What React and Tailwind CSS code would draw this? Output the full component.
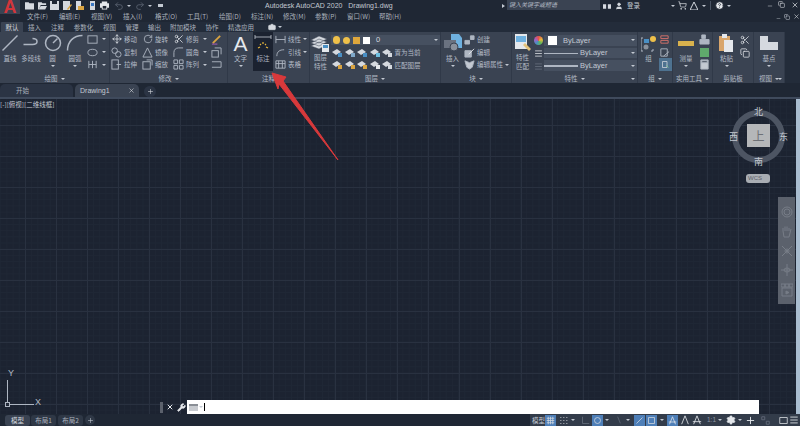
import { Minus, Plus, X, ShoppingCart, User, HelpCircle, Camera, Wrench, Copy, Move, RotateCw, Scissors, Settings, Menu, Undo2, Redo2 } from 'lucide-react';

const menus = ['文件(F)', '编辑(E)', '视图(V)', '插入(I)', '格式(O)', '工具(T)', '绘图(D)', '标注(N)', '修改(M)', '参数(P)', '窗口(W)', '帮助(H)'];
const tabs = [
  ['默认', 'w-[22px]'], ['插入', 'w-[23px]'], ['注释', 'w-[23px]'], ['参数化', 'w-[29px]'], ['视图', 'w-[23px]'],
  ['管理', 'w-[22px]'], ['输出', 'w-[23px]'], ['附加模块', 'w-[34px]'], ['协作', 'w-[24px]'], ['精选应用', 'w-[34px]'],
];

function Caret({ className = '' }) {
  return <span className={`inline-block w-0 h-0 border-x-[2px] border-x-transparent border-t-[2px] border-t-[#c3c9d2] ${className}`} />;
}

// 리본 패널: 본문 + 하단 제목
function Panel({ title, width, children, caret = true, corner = false }) {
  return (
    <div className={`${width} h-full flex flex-col border-r border-[#303948] shrink-0`}>
      <div className="h-[39px] flex">{children}</div>
      <div className="h-[12px] pt-[3px] relative flex items-center justify-center gap-[3px] text-[6.5px] text-[#b4bbc6] leading-none">
        {title}
        {caret && <Caret />}
        {corner && <Caret className="absolute right-[2px]" />}
      </div>
    </div>
  );
}

function Big({ label, label2, icon, width = 'w-[21px]', dark = false, caret = false }) {
  return (
    <div className={`${width} h-full flex flex-col items-center pt-[1px] text-[6.5px] leading-[9px] text-[#b4bbc6] whitespace-nowrap ${dark ? 'bg-[#1b2230]' : ''}`}>
      <div className="h-[20px] flex items-center justify-center">{icon}</div>
      <span className="mt-[1px]">{label}</span>
      {label2 && <span>{label2}</span>}
      {caret && <Caret className="mt-[2px]" />}
    </div>
  );
}

function Row({ icon, label, caret = false, width = 'w-[31px]' }) {
  return (
    <div className={`${width} h-[13px] flex items-center gap-[2px] text-[6.5px] leading-none text-[#b4bbc6] whitespace-nowrap`}>
      <span className="w-[11px] h-[11px] flex items-center justify-center shrink-0">{icon}</span>
      <span>{label}</span>
      {caret && <Caret className="ml-auto mr-[4px]" />}
    </div>
  );
}

function G({ children, size = 11, className = '' }) {
  return (
    <svg width={size} height={size} viewBox="0 0 12 12" fill="none" stroke="#aeb6c2" strokeWidth="1" className={className}>
      {children}
    </svg>
  );
}

function Dropdown({ children }) {
  return (
    <div className="w-[93px] h-[11px] bg-[#465060] flex items-center text-[7.5px] leading-none text-[#c3c9d2] relative font-['Liberation_Sans',sans-serif]">
      {children}
      <Caret className="absolute right-[2px]" />
    </div>
  );
}

function LayerIcon({ c = '#7fa8c9', k = '#d5d9df' }) {
  return (
    <svg width="12" height="11" viewBox="0 0 12 11" className="shrink-0">
      <path d="M1 5l5-3 4 3-5 3z" fill={k} />
      <rect x="7" y="6" width="4" height="4" fill={c} />
    </svg>
  );
}

function TitleBar() {
  return (
    <div className="h-[11px] bg-[#1f2734] flex items-center relative text-[#c3c9d2]">
      <div className="w-[20px] h-[14px] bg-[#3a4352] absolute left-0 top-0 flex items-center justify-center z-10">
        <span className="text-[18px] font-bold text-[#d3363b] leading-[14px] font-['Liberation_Sans',sans-serif]">A</span>
      </div>
      <div className="ml-[25px] flex items-center gap-[3.500px]">
        <svg width="9" height="9" viewBox="0 0 10 9"><path d="M0 1h4l1 1h5v7H0z" fill="#d5d9df" /></svg>
        <svg width="9" height="9" viewBox="0 0 10 9"><path d="M0 1h4l1 1h4v2H3L1 9H0zM3 5h7L8 9H1z" fill="#d5d9df" /></svg>
        <svg width="9" height="9" viewBox="0 0 9 9"><path d="M0 0h9v9H0z" fill="#d5d9df" /><path d="M2 0h5v3H2z" fill="#1f2734" /></svg>
        <svg width="9" height="9" viewBox="0 0 9 9"><path d="M0 0h7v9H0z" fill="#d5d9df" /><path d="M5 9l4-5-1-1-4 5z" fill="#d9a441" /></svg>
        <svg width="9" height="9" viewBox="0 0 9 9"><path d="M1 0h5v9H1z" fill="#d5d9df" /><path d="M3 5h6v4H3z" fill="#d9a441" /></svg>
        <svg width="9" height="9" viewBox="0 0 9 9"><path d="M2 0h5v9H2z" fill="#d5d9df" /><path d="M3 2h3v3H3z" fill="#3b78c4" /></svg>
        <svg width="9" height="9" viewBox="0 0 10 9"><path d="M2 0h6v2h2v5H8v2H2V7H0V2h2z" fill="#e5e8ec" /><path d="M3 5h4v3H3z" fill="#1f2734" /></svg>
        <Undo2 size={10} color="#5c6472" className="ml-[1px]" />
        <Caret />
        <Redo2 size={10} color="#5c6472" />
        <Caret />
        <span className="w-[5px] h-[3px] bg-[#c3c9d2] ml-[2px]" />
      </div>
      <div className="absolute left-[265px] font-['Liberation_Sans',sans-serif] text-[7px] whitespace-pre leading-none">Autodesk AutoCAD 2020   Drawing1.dwg</div>
      <span className="absolute left-[502px] w-0 h-0 border-y-[2px] border-y-transparent border-l-[3px] border-l-[#c3c9d2]" />
      <div className="absolute left-[507px] top-0 w-[93px] h-[10px] bg-[#3a4352] text-[6px] italic leading-[10px] pl-[2px] text-[#b4bbc6] whitespace-nowrap">键入关键字或短语</div>
      <div className="absolute left-[603px] flex items-center gap-[4px]">
        <svg width="8" height="8" viewBox="0 0 9 8"><path d="M0 7V2h3.500v5zM5.500 7V2H9v5z" fill="#d5d9df" /></svg>
        <User size={8} color="#d5d9df" fill="#d5d9df" />
        <span className="text-[6.5px] leading-none">登录</span>
      </div>
      <Caret className="absolute left-[671px]" />
      <ShoppingCart size={9} color="#d5d9df" className="absolute left-[678px]" />
      <svg width="8" height="8" viewBox="0 0 8 8" className="absolute left-[690px]"><path d="M4 0l4 8H0z" fill="none" stroke="#d5d9df" /></svg>
      <Caret className="absolute left-[702px]" />
      <span className="absolute left-[710px] w-[1px] h-[9px] bg-[#4a5464]" />
      <HelpCircle size={9} color="#1f2734" fill="#e5e8ec" className="absolute left-[715px]" />
      <Caret className="absolute left-[727px]" />
      <Minus size={6} color="#d5d9df" className="absolute left-[767px] top-[3px]" />
      <Copy size={7} color="#d5d9df" className="absolute left-[778px] top-[1px]" />
      <X size={8} color="#e5e8ec" className="absolute left-[791px] top-[1px]" />
    </div>
  );
}

function MenuBar() {
  return (
    <div className="h-[11px] bg-[#1f2734] flex items-center pl-[27px] relative text-[6.5px] leading-none text-[#aab1bc]">
      {menus.map((m) => <span key={m} className="w-[32px] whitespace-nowrap">{m}</span>)}
      <Minus size={5} color="#c3c9d2" className="absolute left-[776px] top-[5px]" />
      <Copy size={6} color="#c3c9d2" className="absolute left-[784px] top-[3px]" />
      <X size={7} color="#d5d9df" className="absolute left-[793px] top-[2px]" />
    </div>
  );
}

function TabBar() {
  return (
    <div className="h-[10px] bg-[#232c3a] flex items-center text-[6.5px] leading-none text-[#aab1bc]">
      <div className="ml-[1px] flex h-full items-center">
        {tabs.map(([t, w], i) => (
          <span key={t} className={`${w} h-full flex items-center justify-center whitespace-nowrap ${i === 0 ? 'bg-[#3a4352] text-[#d5d9df] rounded-t-[1px]' : ''}`}>{t}</span>
        ))}
      </div>
      <Camera size={8} color="#d5d9df" fill="#d5d9df" className="ml-[10px]" />
      <Caret className="ml-[2px]" />
    </div>
  );
}

function Ribbon() {
  return (
    <div className="h-[51px] bg-[#232c3a] flex">
      <div className="w-[785px] h-full bg-[#3a4352] flex">
        <Panel title="绘图" width="w-[110px]">
          <Big label="直线" width="w-[20px]" icon={<G size={18}><path d="M1 11L11 1" /></G>} />
          <Big label="多段线" width="w-[22px]" icon={<G size={18}><path d="M1 7h6c4 0 4-4 0-4" /></G>} />
          <Big label="圆" caret icon={<G size={18}><circle cx="6" cy="6" r="5" /><path d="M6 6l3-3" /></G>} />
          <Big label="圆弧" caret width="w-[24px]" icon={<G size={18}><path d="M1 11C1 5 5 1 11 1" /></G>} />
          <div className="flex flex-col pt-[1px]">
            <Row width="w-[22px]" caret icon={<G><rect x="1" y="2" width="10" height="8" /></G>} />
            <Row width="w-[22px]" caret icon={<G><ellipse cx="6" cy="6" rx="5" ry="3.500" /></G>} />
            <Row width="w-[22px]" caret icon={<G><path d="M2 2v8M6 2v8M10 2v8M2 6h8" /></G>} />
          </div>
        </Panel>
        <Panel title="修改" width="w-[118px]">
          <div className="flex flex-col pl-[1px] pt-[1px]">
            <Row label="移动" icon={<Move size={10} color="#d5d9df" />} />
            <Row label="复制" icon={<G><circle cx="4" cy="4" r="3" /><circle cx="8" cy="8" r="3" /></G>} />
            <Row label="拉伸" icon={<G><rect x="1" y="1" width="7" height="10" /><path d="M6 6h5" /></G>} />
          </div>
          <div className="flex flex-col pt-[1px]">
            <Row label="旋转" icon={<RotateCw size={10} color="#aeb6c2" />} />
            <Row label="镜像" icon={<G><path d="M6 1L1 11h10z" /></G>} />
            <Row label="缩放" icon={<G><rect x="1" y="3" width="8" height="8" /><path d="M5 1h6v6" /></G>} />
          </div>
          <div className="flex flex-col pt-[1px]">
            <Row label="修剪" width="w-[38px]" caret icon={<Scissors size={10} color="#d5d9df" />} />
            <Row label="圆角" width="w-[38px]" caret icon={<G><path d="M1 11V6c0-3 2-5 5-5h5" /></G>} />
            <Row label="阵列" width="w-[38px]" caret icon={<G><path d="M1 1h4v4H1zM7 1h4v4H7zM1 7h4v4H1zM7 7h4v4H7z" /></G>} />
          </div>
          <div className="flex flex-col pt-[1px]">
            <Row width="w-[12px]" icon={<G><path d="M2 10L10 2" stroke="#d9a441" strokeWidth="2" /><path d="M1 11h6" stroke="#b25fc4" /></G>} />
            <Row width="w-[12px]" icon={<G><rect x="1" y="4" width="7" height="7" /><path d="M4 1h7v7" /></G>} />
            <Row width="w-[12px]" icon={<G><path d="M1 3h10M1 9h10M11 3v6" /></G>} />
          </div>
        </Panel>
        <Panel title="注释" width="w-[82px]" caret={false}>
          <Big label="文字" caret width="w-[25px]" icon={<span className="font-['Liberation_Sans',sans-serif] text-[21px] leading-none text-[#e5e8ec]">A</span>} />
          <Big label="标注" dark width="w-[20px]" icon={
            <svg width="18" height="17" viewBox="0 0 18 17" fill="none">
              <path d="M1 2h16M1 0v4M17 0v4" stroke="#c3c9d2" strokeWidth=".8" />
              <path d="M4 13l2-1M6 9l1 1M9 7v2M12 9l-1 1M14 13l-2-1" stroke="#e8b73d" strokeWidth="1.200" />
            </svg>
          } />
          <div className="flex flex-col pl-[2px] pt-[1px]">
            <Row label="线性" width="w-[33px]" caret icon={<G><path d="M1 2v8M11 2v8M1 6h10" /></G>} />
            <Row label="引线" width="w-[33px]" caret icon={<G><path d="M2 10C2 5 5 3 10 3" /></G>} />
            <Row label="表格" width="w-[33px]" icon={<G><path d="M1 2h10v8H1zM1 5h10M4 2v8M8 2v8" /></G>} />
          </div>
        </Panel>
        <Panel title="图层" width="w-[131px]">
          <Big label="图层" label2="特性" icon={
            <svg width="19" height="18" viewBox="0 0 19 18">
              <path d="M0 6l8-4 8 3-8 4zM0 9l8-4 8 3-8 4zM0 12l8-4 8 3-8 4z" fill="#d5d9df" stroke="#3a4352" strokeWidth=".5" />
              <rect x="11" y="10" width="7" height="8" fill="#e5e8ec" />
              <rect x="12" y="11" width="5" height="3" fill="#4a8fc4" />
            </svg>
          } />
          <div className="flex flex-col pt-[3px]">
            <div className="w-[109px] h-[11px] bg-[#465060] flex items-center gap-[3px] pl-[2px] text-[7.5px] leading-none text-[#d5d9df] relative">
              <span className="w-[7px] h-[8px] rounded-full bg-[#eec04a]" />
              <span className="w-[7px] h-[7px] rounded-full bg-[#eec04a]" />
              <span className="w-[7px] h-[7px] bg-[#dfa73c]" />
              <span className="w-[7px] h-[7px] bg-white" />
              <span className="ml-[3px] font-['Liberation_Sans',sans-serif]">0</span>
              <Caret className="absolute right-[2px]" />
            </div>
            <div className="flex items-center h-[13px] mt-[1px] gap-[0.500px] text-[6.5px] leading-none text-[#b4bbc6]">
              <LayerIcon c="#4a8fc4" /><LayerIcon /><LayerIcon c="#4a8fc4" /><LayerIcon c="#6fbfe0" /><LayerIcon c="#d5d9df" />
              <span className="ml-[1px]">置为当前</span>
            </div>
            <div className="flex items-center h-[13px] gap-[0.500px] text-[6.5px] leading-none text-[#b4bbc6]">
              <LayerIcon c="#d9a441" /><LayerIcon c="#d9a441" /><LayerIcon c="#d9a441" /><LayerIcon c="#e5e8ec" /><LayerIcon c="#d5d9df" />
              <span className="ml-[1px]">匹配图层</span>
            </div>
          </div>
        </Panel>
        <Panel title="块" width="w-[71px]">
          <Big label="插入" caret width="w-[23px]" icon={
            <svg width="20" height="19" viewBox="0 0 20 19">
              <path d="M8 0h8l3 4v10H8z" fill="#6fb1e0" />
              <rect x="1" y="6" width="12" height="8" fill="#6a7280" />
              <circle cx="11" cy="13" r="4" fill="#8a919c" stroke="#3a4352" />
            </svg>
          } />
          <div className="flex flex-col pt-[1px]">
            <Row label="创建" width="w-[47px]" icon={<G><path d="M1 7h5v4H1zM7 2h4v4H7z" fill="#aeb6c2" /></G>} />
            <Row label="编辑" width="w-[47px]" icon={<G><path d="M1 4h7v7H1z" fill="#aeb6c2" /><path d="M5 8l6-6" stroke="#e5e8ec" /></G>} />
            <Row label="编辑属性" width="w-[47px]" caret icon={<G><path d="M1 2l5 2 5-2-2 7-3 2-3-2z" fill="#c3c9d2" /></G>} />
          </div>
        </Panel>
        <Panel title="特性" width="w-[126px]" corner>
          <Big label="特性" label2="匹配" width="w-[21px]" icon={
            <svg width="18" height="19" viewBox="0 0 18 19">
              <rect x="1" y="1" width="12" height="15" fill="#e5e8ec" />
              <rect x="2" y="3" width="10" height="6" fill="#6fb1e0" />
              <path d="M9 12l6 6 2-2-6-6z" fill="#e3c27b" />
            </svg>
          } />
          <div className="w-[11px] flex flex-col items-center pt-[4px] gap-[4px]">
            <span className="w-[9px] h-[9px] rounded-full bg-[conic-gradient(#e5534b,#e8b73d,#5cb85c,#4a8fc4,#a35fc4,#e5534b)]" />
            <Menu size={9} color="#e5e8ec" />
            <Menu size={9} color="#6a7280" />
          </div>
          <div className="flex flex-col pt-[3px] gap-[2px]">
            <Dropdown><span className="w-[9px] h-[9px] bg-white ml-[4px]" /><span className="ml-[6px]">ByLayer</span></Dropdown>
            <Dropdown><span className="w-[34px] h-[1px] bg-[#aeb6c2]" /><span className="ml-[2px]">ByLayer</span></Dropdown>
            <Dropdown><span className="w-[34px] h-[2px] bg-[#aeb6c2]" /><span className="ml-[2px]">ByLayer</span></Dropdown>
          </div>
        </Panel>
        <Panel title="组" width="w-[35px]">
          <Big label="组" width="w-[21px]" icon={
            <svg width="16" height="17" viewBox="0 0 16 17">
              <path d="M2 3H0v13h2M10 3h2v3M10 16h2v-2" fill="none" stroke="#aeb6c2" />
              <rect x="3" y="4" width="5" height="4" fill="#4a8fc4" />
              <circle cx="5" cy="12" r="2.500" fill="#8a919c" />
              <circle cx="12" cy="4" r="3" fill="#eec04a" />
            </svg>
          } />
          <div className="flex flex-col pt-[1px]">
            <Row width="w-[13px]" icon={<G><path d="M2 2h8v3H2zM2 7h8v3H2z" stroke="#d9736b" /></G>} />
            <Row width="w-[13px]" icon={<G><path d="M2 2h7v8H2zM5 10l6-5" /></G>} />
            <div className="w-[13px] h-[13px] bg-[#4e7290] flex items-center justify-center"><G size={9}><path d="M2 2h6v8H2z" stroke="#d5d9df" /><path d="M7 7l3 3" stroke="#7fd08a" /></G></div>
          </div>
        </Panel>
        <Panel title="实用工具" width="w-[40px]">
          <Big label="测量" caret width="w-[26px]" icon={<span className="w-[16px] h-[5px] bg-[#d9b24d]" />} />
          <div className="flex flex-col pt-[1px]">
            <Row width="w-[13px]" icon={<G><path d="M3 1h4v4H3zM1 6h10v5H1z" fill="#aeb6c2" /></G>} />
            <Row width="w-[13px]" icon={<span className="w-[9px] h-[9px] bg-[#5fa86c]" />} />
            <Row width="w-[13px]" icon={<G><path d="M2 1h8v10H2z" fill="#c3c9d2" /><path d="M3 2h6v2H3z" fill="#3a4352" /></G>} />
          </div>
        </Panel>
        <Panel title="剪贴板" width="w-[41px]" caret={false}>
          <Big label="粘贴" caret width="w-[27px]" icon={
            <svg width="15" height="18" viewBox="0 0 15 18">
              <rect x="0" y="2" width="11" height="15" fill="#d9a66c" />
              <rect x="3" y="0" width="5" height="4" fill="#e5e8ec" />
              <rect x="5" y="6" width="9" height="12" fill="#e5e8ec" />
            </svg>
          } />
          <div className="flex flex-col gap-[3px] pt-[3px]">
            <Scissors size={10} color="#d5d9df" />
            <Copy size={10} color="#d5d9df" />
          </div>
        </Panel>
        <Panel title="视图" width="w-[31px]" corner>
          <Big label="基点" caret width="w-[31px]" icon={
            <svg width="18" height="14" viewBox="0 0 18 14"><path d="M0 0h8v6h10v8H0z" fill="#d5d9df" /></svg>
          } />
        </Panel>
      </div>
    </div>
  );
}

function FileTabs() {
  return (
    <div className="h-[13px] mt-[1px] flex items-end text-[6.5px] leading-none text-[#aab1bc]">
      <div className="w-[73px] h-full bg-[#2b3444] rounded-t-[5px] pl-[16px] flex items-center">开始</div>
      <div className="w-[64px] h-full ml-[2px] bg-[#3a4352] rounded-t-[5px] pl-[5px] pr-[4px] flex items-center justify-between text-[#c3c9d2]">
        <span className="font-['Liberation_Sans',sans-serif] text-[7px]">Drawing1</span>
        <X size={7} color="#d5d9df" />
      </div>
      <div className="w-[12px] h-[11px] ml-[5px] rounded-full bg-[#2b3444] flex items-center justify-center">
        <Plus size={7} color="#d5d9df" />
      </div>
    </div>
  );
}

function ViewCube() {
  return (
    <div className="absolute left-[727px] top-[6px] w-[62px] h-[80px] text-[9px] leading-none text-[#c3c9d2]">
      <div className="absolute left-[5px] top-[5px] w-[53px] h-[53px] rounded-full border-[6px] border-[#4d5563]" />
      <div className="absolute left-[20px] top-[19px] w-[23px] h-[23px] bg-[#b5b7b9] flex items-center justify-center text-[12px] text-[#6d7076]">上</div>
      <span className="absolute left-[27px] top-[2px]">北</span>
      <span className="absolute left-[27px] top-[52px]">南</span>
      <span className="absolute left-[2px] top-[27px]">西</span>
      <span className="absolute left-[52px] top-[27px]">东</span>
      <div className="absolute left-[19px] top-[69px] w-[24px] h-[9px] rounded-[3px] bg-[#a9adb3] text-[6px] leading-[9px] pl-[2px] text-[#5d6168] font-['Liberation_Sans',sans-serif]">WCS</div>
    </div>
  );
}

function NavBar() {
  return (
    <div className="absolute left-[778px] top-[98px] w-[17px] h-[107px] bg-[#5b616c] flex flex-col items-center gap-[7px] pt-[9px]">
      <svg width="12" height="12" viewBox="0 0 12 12" fill="none" stroke="#777d87"><circle cx="6" cy="6" r="5" /><circle cx="6" cy="6" r="3" /></svg>
      <svg width="11" height="13" viewBox="0 0 11 13" fill="none" stroke="#777d87"><path d="M2 6V3M4 6V1.500M6 6V1.500M8 6V3M2 6l1 6h5l2-8" /></svg>
      <svg width="12" height="12" viewBox="0 0 12 12" fill="none" stroke="#777d87"><path d="M1 1l10 10M11 1L1 11" /><circle cx="6" cy="6" r="2" /></svg>
      <svg width="12" height="12" viewBox="0 0 12 12" fill="none" stroke="#777d87"><path d="M6 0v12M0 6h12" /><ellipse cx="6" cy="6" rx="3" ry="2" /></svg>
      <svg width="12" height="14" viewBox="0 0 12 14" fill="none" stroke="#777d87"><path d="M0 1h4v3H0zM4 1h4v3H4zM8 1h4v3H8zM1 5h10v8H1z" /><path d="M5 8l3 1.500L5 11z" fill="#777d87" /></svg>
    </div>
  );
}

function Ucs() {
  return (
    <div className="absolute left-[4px] top-[267px] w-[40px] h-[44px] text-[9px] leading-none text-[#b4bbc6] font-['Liberation_Sans',sans-serif]">
      <span className="absolute left-[4px] top-[3px]">Y</span>
      <div className="absolute left-[3px] top-[14px] w-[1px] h-[23px] bg-[#aeb6c2]" />
      <div className="absolute left-[1px] top-[36px] w-[5px] h-[5px] border border-[#aeb6c2]" />
      <div className="absolute left-[6px] top-[38px] w-[24px] h-[1px] bg-[#aeb6c2]" />
      <span className="absolute left-[31px] top-[32px]">X</span>
    </div>
  );
}

function CommandLine() {
  return (
    <div className="absolute left-[159px] top-[301px] flex items-center h-[14px]">
      <div className="w-[28px] h-full flex items-center gap-[3px] pl-[1px]">
        <span className="w-[3px] h-[11px] bg-[#5b616c]" />
        <X size={8} color="#e5e8ec" strokeWidth={3} />
        <Wrench size={9} color="#e5e8ec" fill="#e5e8ec" />
      </div>
      <div className="w-[572px] h-full bg-white flex items-center pl-[2px]">
        <span className="w-[9px] h-[7px] bg-[#c8cbd0] border-t-[2px] border-[#8a8f96]" />
        <Caret className="ml-[1px] border-t-[#555]" />
        <span className="w-[1px] h-[8px] bg-black ml-[1px]" />
      </div>
    </div>
  );
}

function Arrow() {
  return (
    <svg width="90" height="110" viewBox="0 0 90 110" className="absolute left-[260px] top-[-29px]">
      <path d="M12 3L26 7 23 11 78 90 19 14 18 19Z" fill="#d8393b" stroke="#d8393b" strokeWidth="1" strokeLinejoin="round" />
    </svg>
  );
}

function Blue({ children }) {
  return <span className="w-[11px] h-[11px] bg-[#4e7fb8] flex items-center justify-center shrink-0">{children}</span>;
}

function StatusBar() {
  return (
    <div className="h-[12px] bg-[#1f2734] flex items-center text-[6.5px] leading-none text-[#aab1bc]">
      <span className="w-[25px] h-[11px] ml-[5px] bg-[#3a4352] flex items-center justify-center text-[#d5d9df] rounded-[3px]">模型</span>
      <span className="w-[25px] h-[11px] ml-[1px] bg-[#2f3846] flex items-center justify-center rounded-[3px]">布局1</span>
      <span className="w-[25px] h-[11px] ml-[2px] bg-[#2f3846] flex items-center justify-center rounded-[3px]">布局2</span>
      <span className="w-[10px] h-[10px] ml-[2px] bg-[#2f3846] flex items-center justify-center rounded-full"><Plus size={7} color="#c3c9d2" /></span>
      <div className="ml-auto w-[270px] h-full bg-[#333c4a] flex items-center pl-[2px]">
        <span className="w-[13px] text-[#c3c9d2]">模型</span>
        <Blue><G size={9}><path d="M1 3h10M1 6h10M1 9h10M3 1v10M6 1v10M9 1v10" stroke="#d5d9df" /></G></Blue>
        <G size={9} className="ml-[3px]"><path d="M2 2h1M6 2h1M10 2h1M2 6h1M6 6h1M10 6h1M2 10h1M6 10h1M10 10h1" stroke="#e5e8ec" strokeWidth="1.500" /></G>
        <Caret className="ml-[3px]" />
        <G size={9} className="ml-[6px]"><path d="M2 1v9h9" stroke="#6a7280" /></G>
        <span className="ml-[2px]"><Blue><G size={9}><circle cx="6" cy="6" r="4" stroke="#d5d9df" /></G></Blue></span>
        <Caret className="ml-[2px]" />
        <G size={8} className="ml-[6px]"><path d="M4 1l4 10" stroke="#6a7280" /></G>
        <Caret className="ml-[3px]" />
        <span className="ml-[4px]"><Blue><G size={9}><path d="M2 10l8-8" stroke="#d5d9df" /></G></Blue></span>
        <span className="ml-[1px]"><Blue><G size={9}><path d="M2 2h8v8H2z" stroke="#d5d9df" /></G></Blue></span>
        <Caret className="ml-[3px]" />
        <span className="ml-[3px]"><Blue><G size={9}><path d="M6 1L2 11M6 1l4 10M1 8h10" stroke="#e5e8ec" /></G></Blue></span>
        <G size={10} className="ml-[2px]"><path d="M6 1L2 11M6 1l4 10" stroke="#e5e8ec" /></G>
        <G size={10} className="ml-[2px]"><path d="M6 1L2 11M6 1l4 10M1 8h10" stroke="#e5e8ec" /></G>
        <span className="ml-[5px] font-['Liberation_Sans',sans-serif] text-[6.5px] text-[#8e96a2]">1:1</span>
        <Caret className="ml-[2px]" />
        <Settings size={10} color="#e5e8ec" fill="#e5e8ec" className="ml-[4px]" />
        <Caret className="ml-[2px]" />
        <Plus size={11} color="#e5e8ec" className="ml-[3px]" />
        <G size={9} className="ml-[5px]"><path d="M1 1h4v4H1zM7 7h4v4H7z" stroke="#6a7280" /></G>
        <G size={9} className="ml-[9px]"><path d="M1 2h10v8H1z" stroke="#e5e8ec" /></G>
        <Menu size={10} color="#e5e8ec" className="ml-[1px]" />
      </div>
    </div>
  );
}

export default function App() {
  return (
    <div className="w-[800px] h-[426px] overflow-hidden flex flex-col bg-[#1f2734] font-['Noto_Sans_CJK_SC','Noto_Sans',sans-serif]">
      <TitleBar />
      <MenuBar />
      <TabBar />
      <Ribbon />
      <FileTabs />
      <div className="h-[2px] bg-[#3f4a5c]" />
      <div className="relative h-[315px] bg-[#1c2331] bg-[linear-gradient(#293140_1px,transparent_1px),linear-gradient(90deg,#293140_1px,transparent_1px),linear-gradient(#1f2735_1px,transparent_1px),linear-gradient(90deg,#1f2735_1px,transparent_1px)] bg-[size:31px_31px,31px_31px,6.2px_6.2px,6.2px_6.2px] bg-[position:25px_26px,25px_26px,25px_26px,25px_26px]">
        <span className="absolute left-0 top-[2px] text-[6.5px] leading-none text-[#c3c9d2] whitespace-nowrap">[-][俯视][二维线框]</span>
        <Arrow />
        <ViewCube />
        <NavBar />
        <Ucs />
        <CommandLine />
        <div className="absolute right-0 top-0 w-[4px] h-full bg-[#a9bdd0]" />
      </div>
      <StatusBar />
    </div>
  );
}
